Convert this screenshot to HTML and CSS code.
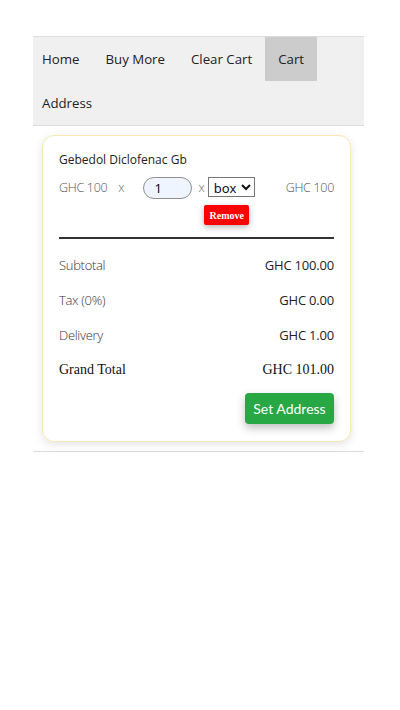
FILE: index.html
```html
<!DOCTYPE html>
<html>
<head>
<meta charset="utf-8">
<link rel="stylesheet" href="styles.css">
</head>
<body>
<div class="page">
  <nav class="nav">
    <ul class="nav-list">
      <li class="nav-item">Home</li>
      <li class="nav-item">Buy More</li>
      <li class="nav-item">Clear Cart</li>
      <li class="nav-item active">Cart</li>
      <li class="nav-item">Address</li>
    </ul>
  </nav>
  <main class="content">
    <section class="card">
      <div class="product-name">Gebedol Diclofenac Gb</div>
      <div class="item-row">
        <span class="price">GHC 100</span>
        <span class="times first">x</span>
        <input class="qty" type="text" value="1">
        <div class="unit-group">
          <div class="unit-line">
            <span class="times">x</span>
            <select class="unit"><option>box</option></select>
          </div>
          <button class="remove">Remove</button>
        </div>
        <span class="line-total">GHC 100</span>
      </div>
      <hr class="divider">
      <div class="summary-row"><span class="label">Subtotal</span><span class="value">GHC 100.00</span></div>
      <div class="summary-row"><span class="label">Tax (0%)</span><span class="value">GHC 0.00</span></div>
      <div class="summary-row"><span class="label">Delivery</span><span class="value">GHC 1.00</span></div>
      <div class="summary-row grand"><span class="label">Grand Total</span><span class="value">GHC 101.00</span></div>
      <div class="actions"><button class="set-address">Set Address</button></div>
    </section>
  </main>
</div>
</body>
</html>
```
FILE: styles.css
```css
* { box-sizing: border-box; }
html, body { margin: 0; padding: 0; background: #fff; }
body { font-family: "Open Sans", "Noto Sans", sans-serif; color: #222; }

.page {
  width: 331px;
  margin-left: 33px;
  padding-top: 36px;
}

.nav {
  background: #f0f0f0;
  border-top: 1px solid #dcdcdc;
  border-bottom: 1px solid #dcdcdc;
  overflow: hidden;
}
.nav-list {
  list-style: none;
  margin: 0 0 0 -4px;
  padding: 0;
  display: flex;
  flex-wrap: wrap;
}
.nav-item {
  padding: 0 13px;
  line-height: 44px;
  height: 44px;
  font-size: 13.25px;
  color: #222;
}
.nav-item.active { background: #cccccc; }

.content {
  padding: 9px 13px 9px 9px;
  border-bottom: 1px solid #dcdcdc;
}

.card {
  border: 1px solid #f7e9b0;
  border-radius: 12px;
  box-shadow: 0 3px 10px rgba(0,0,0,0.10);
  padding: 15px 16px 17px 16px;
  background: #fff;
}

.product-name {
  font-size: 12px;
  line-height: 18px;
  color: #222;
}

.item-row {
  display: flex;
  align-items: flex-start;
  margin-top: 8px;
  font-size: 12.5px;
  color: #555;
}
.price, .line-total {
  line-height: 22px;
  font-weight: 300;
  letter-spacing: -0.3px;
}
.times {
  line-height: 22px;
  font-weight: 300;
  color: #666;
}
.times.first { margin-left: 11px; }
.qty {
  margin-left: 18px;
  width: 49px;
  height: 22px;
  border: 1px solid #8f8f8f;
  border-radius: 11px;
  background: #eef5ff;
  padding: 0 0 0 11px;
  font-family: "Noto Sans", sans-serif;
  font-size: 13px;
  color: #111;
  outline: none;
}
.unit-group {
  display: flex;
  flex-direction: column;
  align-items: center;
  margin-left: 7px;
}
.unit-line {
  display: flex;
  align-items: flex-start;
}
.unit {
  margin: 0 0 0 3px;
  width: 47px;
  height: 20px;
  border: 1px solid #767676;
  border-radius: 0;
  background: #fff;
  font-family: "Noto Sans", sans-serif;
  font-size: 13px;
  color: #111;
  padding: 0 0 0 1px;
}
.remove {
  margin-top: 6px;
  width: 45px;
  height: 20px;
  border: none;
  border-radius: 2px;
  background: #ff0000;
  color: #fff;
  font-family: "Liberation Serif", serif;
  font-weight: bold;
  font-size: 10px;
  padding: 0;
  box-shadow: 0 2px 6px rgba(0,0,0,0.3);
}
.line-total { margin-left: auto; }

.divider {
  margin: 12px 0 8px;
  border: none;
  height: 2px;
  background: #333;
}

.summary-row {
  display: flex;
  justify-content: space-between;
  align-items: center;
  height: 35px;
  font-size: 13px;
}
.summary-row .label { color: #333; font-weight: 300; letter-spacing: -0.3px; }
.summary-row .value { color: #222; letter-spacing: -0.2px; }
.summary-row.grand {
  font-family: "Liberation Serif", serif;
  font-size: 14px;
}
.summary-row.grand .label, .summary-row.grand .value { color: #111; font-weight: normal; letter-spacing: 0; }

.actions {
  display: flex;
  justify-content: flex-end;
  margin-top: 6px;
}
.set-address {
  width: 89px;
  height: 31px;
  border: none;
  border-radius: 4px;
  background: #28a745;
  color: #fff;
  font-family: "Lato", sans-serif;
  font-size: 14px;
  padding: 0;
  box-shadow: 0 4px 8px rgba(0,0,0,0.25);
}
```
